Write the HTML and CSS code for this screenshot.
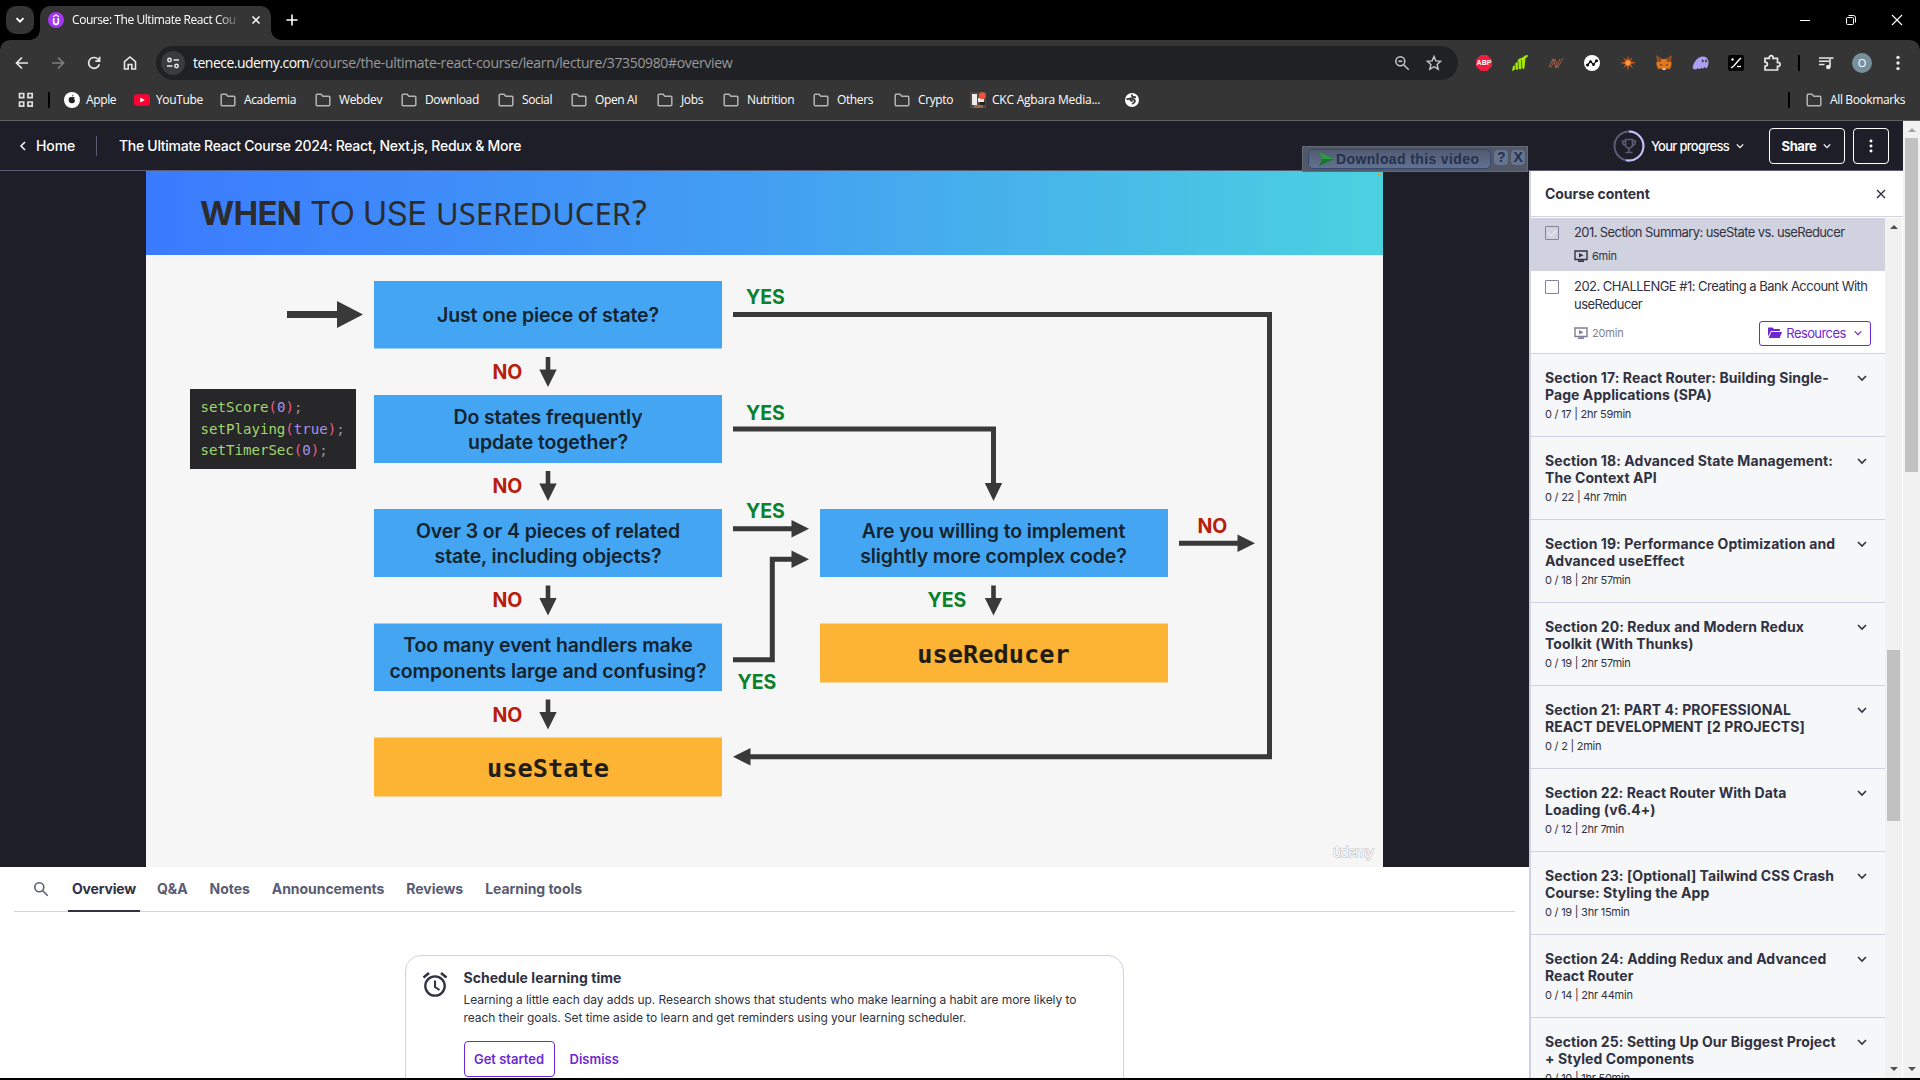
FILE: index.html
```html
<!DOCTYPE html>
<html lang="en">
<head>
<meta charset="utf-8">
<title>Course: The Ultimate React Course</title>
<link rel="stylesheet" href="styles.css">
</head>
<body>
<svg width="0" height="0" class="defs">
  <symbol id="folder" viewBox="0 0 16 16"><path d="M1.2 12.8V3.2q0-.9.9-.9h4l1.7 1.9h6.1q.9 0 .9.9v7.7q0 .9-.9.9H2.1q-.9 0-.9-.9z" fill="none" stroke="#b4b4b4" stroke-width="1.5"/></symbol>
  <symbol id="chev" viewBox="0 0 10 10"><path d="M1 3l4 4 4-4" fill="none" stroke="currentColor" stroke-width="1.6"/></symbol>
  <symbol id="dots" viewBox="0 0 4 16"><circle cx="2" cy="2.4" r="1.7"/><circle cx="2" cy="8" r="1.7"/><circle cx="2" cy="13.6" r="1.7"/></symbol>
  <symbol id="lesson" viewBox="0 0 14 12"><path d="M1 1h12v8.5H1zM4 11.3h6" fill="none" stroke="currentColor" stroke-width="1.4"/><path d="M5 3l4.5 2.3L5 7.6z" fill="currentColor"/></symbol>
</svg>

<header class="browser">
  <div class="tabstrip">
    <div class="tab-search"><svg width="10" height="10"><path d="M1.5 3.2L5 6.7l3.500-3.500" fill="none" stroke="#fff" stroke-width="1.8"/></svg></div>
    <div class="tab">
      <svg class="favicon" width="16" height="16" viewBox="0 0 16 16"><circle cx="8" cy="8" r="8" fill="#a435f0"/><path d="M5.700 6v4q0 2.300 2.300 2.300t2.300-2.300V6" fill="none" stroke="#fff" stroke-width="1.700"/><path d="M5 4.800L8 3l3 1.800" fill="none" stroke="#fff" stroke-width="1.300"/></svg>
      <span class="tab-title">Course: The Ultimate React Cou</span>
      <svg width="10" height="10"><path d="M1.500 1.500l7 7M8.500 1.500l-7 7" stroke="#fff" stroke-width="1.500"/></svg>
    </div>
    <svg class="new-tab" width="12" height="12"><path d="M6 .5v11M.5 6h11" stroke="#fff" stroke-width="1.600"/></svg>
    <div class="window-controls">
      <svg width="12" height="12"><path d="M1 6.500h10" stroke="#fff"/></svg>
      <svg width="12" height="12"><rect x="1.500" y="3.500" width="7" height="7" rx="1" fill="none" stroke="#fff"/><path d="M3.500 1.500h5q2 0 2 2v5" fill="none" stroke="#fff"/></svg>
      <svg width="12" height="12"><path d="M1 1l10 10M11 1L1 11" stroke="#fff" stroke-width="1.100"/></svg>
    </div>
  </div>

  <div class="toolbar">
    <div class="nav">
      <svg width="16" height="16"><path d="M14 8H3M8 2.500L2.500 8 8 13.500" fill="none" stroke="#e8e8e8" stroke-width="1.700"/></svg>
      <svg width="16" height="16"><path d="M2 8h11M8 2.500L13.500 8 8 13.500" fill="none" stroke="#7d7d7d" stroke-width="1.700"/></svg>
      <svg width="16" height="16"><path d="M13.300 9.200A5.400 5.400 0 1 1 11.800 4l1.600 1.600M13.600 1.800v4.300H9.300" fill="none" stroke="#e8e8e8" stroke-width="1.700"/></svg>
      <svg width="16" height="16"><path d="M2.500 6.700L8 2l5.500 4.700V14H9.800V9.500H6.200V14H2.500z" fill="none" stroke="#e8e8e8" stroke-width="1.600"/></svg>
    </div>
    <div class="omnibox">
      <span class="site-info"><svg width="14" height="14" fill="none" stroke="#e8e8e8" stroke-width="1.500"><circle cx="3.500" cy="4" r="1.700"/><path d="M7.500 4H13M1 10h5.500"/><circle cx="10.500" cy="10" r="1.700"/></svg></span>
      <span class="host">tenece.udemy.com</span><span class="path">/course/the-ultimate-react-course/learn/lecture/37350980#overview</span>
      <svg class="zoom-icon" width="16" height="16" fill="none" stroke="#c8c8c8" stroke-width="1.500"><circle cx="6.300" cy="6.300" r="4.500"/><path d="M9.700 9.700l5 5M4.300 6.300h4"/></svg>
      <svg width="16" height="16" viewBox="0 0 16 16"><path d="M8 1.500l1.900 4.400 4.800.4-3.600 3.200 1.100 4.700L8 11.700l-4.200 2.500 1.100-4.700L1.300 6.300l4.800-.4z" fill="none" stroke="#c8c8c8" stroke-width="1.400"/></svg>
    </div>
    <div class="extensions">
      <span class="abp">ABP</span>
      <svg width="16" height="16"><path d="M0 16l1-5 1.500-.5L3.500 8l1.500-.5L6.500 4 8 3.500 9.500 3 12 1.500 13 .5l3-.5-.5 2-2 1-.5 5-.5 5-1.500 1.500-1-3-1 2.500-1.500.5-1-2.500L6 14.500 4.500 15l-1-2-1 2z" fill="#a4e800"/><path d="M3.300 9.500v4M6.300 6.500v6M9.500 5v7" stroke="#49690a" stroke-width=".9"/></svg>
      <svg width="16" height="16" fill="none" stroke-width="1"><path d="M1 12.500L5 4l3 9 4-9" stroke="#b55f4a"/><path d="M3 12.500L7 4l3 8.500 5-9.500" stroke="#96593f"/></svg>
      <svg width="16" height="16"><circle cx="8" cy="8" r="8" fill="#fff"/><path d="M3.500 10l3-3.500 3 3L12.500 5.500" fill="none" stroke="#111" stroke-width="1.200"/><circle cx="3.500" cy="10" r="1.500"/><circle cx="6.500" cy="6.500" r="1.200"/><circle cx="9.500" cy="9.800" r="1.300"/><circle cx="12.500" cy="5.800" r="1.500"/></svg>
      <svg width="16" height="16"><path d="M8 0l.9 5 3.600-3-2.200 4.300 5.700 1.400-5.500 1.300 3 4.500-4.500-3.200-1 5.700-1-5.700-4 3.200L5.500 9.200 0 8l5.500-1.500L3 2.500 7 5z" fill="#d9571d"/><circle cx="8" cy="7.800" r="2.600" fill="#ff9b32"/></svg>
      <svg width="16" height="16"><path d="M.5.500L6 4h4L15.500.500 15 6l.7 3-1.700 5-3.500-.500L9.500 15h-3l-1-1.500L2 14 .3 9 1 6z" fill="#e2761b"/><path d="M.5.500L6 4 4 7.500 1 6zM15.500.500L10 4l2 3.500L15 6z" fill="#8f4a1d"/><path d="M4.500 9l2 1-2 .7zM11.500 9l-2 1 2 .7z" fill="#233447"/><path d="M6.500 13h3v2h-3z" fill="#d7c1b3"/></svg>
      <svg width="17" height="16"><path d="M.5 13Q2.500 3 10 1.500q6-.5 6.500 5.500.3 3.500-1.500 6-1.300 1-2.200-1.200-1.500 3-3.300.9Q7 15 5.700 13q-2.500 3-5.200 0z" fill="#ab9ff2"/><ellipse cx="10.700" cy="6" rx=".9" ry="1.400" fill="#333"/><ellipse cx="14" cy="6" rx=".9" ry="1.400" fill="#333"/></svg>
      <svg width="16" height="16"><rect width="16" height="16" rx="2.500"/><path d="M3 13l3-2.200L10 6l3-3" fill="none" stroke="#fff" stroke-width="1.400"/><circle cx="4.500" cy="4.500" r="1.200" fill="#fff"/><path d="M9 11.500h4" stroke="#fff" stroke-width="1.300"/></svg>
      <svg width="18" height="18"><path d="M2 4.300h4.300a2 2 0 1 1 3.800 0h4.400v4.200a2 2 0 1 1 0 3.800V16H2v-3.800q2.400-.2 2.400-2T2 8.200z" fill="none" stroke="#e8e8e8" stroke-width="1.700"/></svg>
      <i class="divider"></i>
      <svg width="16" height="16"><path d="M1 3h10M1 6.300h10M1 9.600h5.500" stroke="#e8e8e8" stroke-width="1.500"/><path d="M12 12V3h3.500" fill="none" stroke="#e8e8e8" stroke-width="1.600"/><circle cx="10.300" cy="12" r="2.300" fill="#e8e8e8"/></svg>
      <span class="avatar">O</span>
      <svg width="4" height="16" fill="#e8e8e8"><use href="#dots"/></svg>
    </div>
  </div>

  <nav class="bookmarks">
    <svg width="16" height="16" fill="none" stroke="#e0e0e0" stroke-width="1.700"><path d="M1.500 1.500h4.200v4.200H1.500zM10 1.500h4.200v4.200H10zM1.500 10h4.200v4.200H1.500zM10 10h4.200v4.200H10z"/></svg>
    <i class="divider"></i>
    <a class="near"><svg width="16" height="16"><circle cx="8" cy="8" r="8" fill="#fff"/><path d="M8 5.300q1.500-.9 2.800.3-1.500 1.500.3 3.200-1.200 3.200-3.100 2.300-2 1-3.200-2-.6-3.300 1.500-4Q7.300 5 8 5.300zM8 4.700q0-1.600 1.500-2.200 0 1.700-1.500 2.200z" fill="#222"/></svg>Apple</a>
    <a class="near"><svg width="16" height="16"><rect y="2.300" width="16" height="11.400" rx="2.500" fill="#ff0033"/><path d="M6.300 5.500L10.800 8l-4.500 2.500z" fill="#fff"/></svg>YouTube</a>
    <a><svg width="16" height="16"><use href="#folder"/></svg>Academia</a>
    <a><svg width="16" height="16"><use href="#folder"/></svg>Webdev</a>
    <a><svg width="16" height="16"><use href="#folder"/></svg>Download</a>
    <a><svg width="16" height="16"><use href="#folder"/></svg>Social</a>
    <a><svg width="16" height="16"><use href="#folder"/></svg>Open AI</a>
    <a><svg width="16" height="16"><use href="#folder"/></svg>Jobs</a>
    <a><svg width="16" height="16"><use href="#folder"/></svg>Nutrition</a>
    <a><svg width="16" height="16"><use href="#folder"/></svg>Others</a>
    <a><svg width="16" height="16"><use href="#folder"/></svg>Crypto</a>
    <a class="near media"><svg width="16" height="16"><rect width="16" height="16" fill="#504840"/><rect x="2" y="2" width="5" height="11" fill="#eee"/><path d="M8 6h6v4H8z" fill="#f3e8e2"/><path d="M10 10h5v3h-5z" fill="#222"/><path d="M4 13h9v3H4z" fill="#9a6748"/><circle cx="12.300" cy="3.700" r="3.500" fill="#ee5340"/></svg>CKC Agbara Media...</a>
    <svg width="16" height="16"><circle cx="8" cy="8" r="7" fill="#fff"/><path d="M2.500 7q2 .3 3.500-.3 1.700-1 3 .5 1.500.300 2 1.800-.5 2-2.800 3M8 2.500q-.5 2 1.500 2.500l2.500.300M6 7.500l2.500 2" fill="none" stroke="#353535" stroke-width="1.800"/></svg>
    <i class="divider"></i>
    <a class="all"><svg width="16" height="16"><use href="#folder"/></svg>All Bookmarks</a>
  </nav>
</header>

<div class="page">
  <div class="app">
    <header class="course-header">
      <a class="home"><svg width="8" height="10"><path d="M6 1L2 5l4 4" fill="none" stroke="#fff" stroke-width="1.500"/></svg>Home</a>
      <h1>The Ultimate React Course 2024: React, Next.js, Redux &amp; More</h1>
      <div class="progress">
        <svg width="32" height="32" fill="none"><circle cx="16" cy="16" r="14.500" stroke="#595c73" stroke-width="2"/><path d="M16 1.500a14.500 14.500 0 1 1-3 28.700" stroke="#c0c4fc" stroke-width="2"/><path d="M12.500 9.500h7v5q0 3.500-3.500 3.500t-3.500-3.500zM12.500 11h-3q0 4 3.300 4.500M19.500 11h3q0 4-3.300 4.500M16 18v4M12.500 22.500h7" stroke="#595c73" stroke-width="1.600"/></svg>
        <span>Your progress</span><svg width="8" height="8"><use href="#chev"/></svg>
      </div>
      <button class="share">Share<svg width="8" height="8"><use href="#chev"/></svg></button>
      <button class="more"><svg width="4" height="14" fill="#fff"><use href="#dots"/></svg></button>
    </header>

    <div class="body">
      <main>
        <div class="video">
          <svg class="slide" width="1237" height="696" viewBox="146 171 1237 696">
            <defs>
              <linearGradient id="banner"><stop offset="0" stop-color="#3b7bff"/><stop offset=".5" stop-color="#439ff2"/><stop offset="1" stop-color="#4bd1e0"/></linearGradient>
              <path id="down" d="M-2.300 0h4.600v12.500H8.700L0 30-8.700 12.500h6.400z"/>
            </defs>
            <rect x="146" y="171" width="1237" height="696" fill="#f6f6f6"/>
            <rect x="146" y="171" width="1237" height="84" fill="url(#banner)"/>
            <g class="slide-title">
              <text x="200" y="225" textLength="102" class="heavy">WHEN</text>
              <text x="310" y="225" textLength="117">TO USE</text>
              <text x="436" y="225" textLength="195" class="alt">USEREDUCER</text>
              <text x="632" y="225" class="alt mark">?</text>
            </g>
            <g fill="#44a5f2">
              <rect x="374" y="281" width="348" height="67.500"/><rect x="374" y="395" width="348" height="68"/>
              <rect x="374" y="509" width="348" height="68"/><rect x="374" y="623.500" width="348" height="67.500"/>
              <rect x="820" y="509" width="348" height="68"/>
            </g>
            <g fill="#fdb333"><rect x="374" y="737.500" width="348" height="59"/><rect x="820" y="623.500" width="348" height="59"/></g>
            <g class="question">
              <text x="548" y="322">Just one piece of state?</text>
              <text x="548" y="423.500">Do states frequently</text><text x="548" y="449">update together?</text>
              <text x="548" y="537.500">Over 3 or 4 pieces of related</text><text x="548" y="563">state, including objects?</text>
              <text x="548" y="652">Too many event handlers make</text><text x="548" y="677.500">components large and confusing?</text>
              <text x="993.500" y="537.500">Are you willing to implement</text><text x="993.500" y="563">slightly more complex code?</text>
            </g>
            <g class="result"><text x="548" y="776.500">useState</text><text x="993.500" y="662.500">useReducer</text></g>
            <g class="yes"><text x="746" y="304">YES</text><text x="746" y="420">YES</text><text x="746" y="517.500">YES</text><text x="737.500" y="689">YES</text><text x="927.500" y="607">YES</text></g>
            <g class="no"><text x="492.500" y="378.500">NO</text><text x="492.500" y="492.500">NO</text><text x="492.500" y="607">NO</text><text x="492.500" y="721.500">NO</text><text x="1197.500" y="532.500">NO</text></g>
            <g fill="#393939">
              <path d="M287 311h50v-10l26 13.500-26 13.500v-10h-50z"/>
              <use href="#down" x="548" y="357"/><use href="#down" x="548" y="471"/><use href="#down" x="548" y="585.500"/><use href="#down" x="548" y="699.500"/><use href="#down" x="993.500" y="585.500"/>
              <path d="M984.800 483h17.400L993.500 501zM791.500 520l17.500 8.700-17.500 8.700zM791.500 550.500l17.500 8.700-17.500 8.700zM1237.500 534.500l17.500 8.800-17.500 8.800zM750.500 748l-17.500 8.800 17.500 8.800z"/>
            </g>
            <g fill="none" stroke="#393939" stroke-width="5"><path d="M733 314.500h536.500v442.300H750"/><path d="M733 429h260.500v55"/><path d="M733 528.700h59"/><path d="M733 659.700h39.300V559.200H792"/><path d="M1179 543.300h59"/></g>
            <rect x="190" y="389" width="166" height="80" fill="#272629"/>
            <g class="code">
              <text x="200.500" y="412">setScore<tspan class="paren">(</tspan><tspan class="value">0</tspan><tspan class="paren">)</tspan><tspan class="semi">;</tspan></text>
              <text x="200.500" y="433.500">setPlaying<tspan class="paren">(</tspan><tspan class="value">true</tspan><tspan class="paren">)</tspan><tspan class="semi">;</tspan></text>
              <text x="200.500" y="454.500">setTimerSec<tspan class="paren">(</tspan><tspan class="value">0</tspan><tspan class="paren">)</tspan><tspan class="semi">;</tspan></text>
            </g>
            <circle cx="1379" cy="174.500" r="1.700" fill="#e79a3c"/>
            <text class="watermark" x="1333" y="857" textLength="41">udemy</text>
            <path class="watermark" d="M1334 848l3-2 3 2"/>
          </svg>
        </div>

        <nav class="tabs">
          <svg width="16" height="16" fill="none" stroke="#595c73" stroke-width="1.600"><circle cx="6.300" cy="6.300" r="4.500"/><path d="M9.700 9.700l5 5"/></svg>
          <a class="active">Overview</a><a>Q&amp;A</a><a>Notes</a><a>Announcements</a><a>Reviews</a><a>Learning tools</a>
        </nav>

        <section class="schedule">
          <svg width="26" height="26" fill="none" stroke="#303141"><circle cx="13" cy="14" r="9.700" stroke-width="2.300"/><path d="M13 8.500V15l4.500 3" stroke-width="2"/><path d="M1.500 5.500L7 1M24.500 5.500L19 1" stroke-width="2.500"/></svg>
          <div>
            <h2>Schedule learning time</h2>
            <p>Learning a little each day adds up. Research shows that students who make learning a habit are more likely to<br>reach their goals. Set time aside to learn and get reminders using your learning scheduler.</p>
            <div class="actions"><button class="start">Get started</button><button class="dismiss">Dismiss</button></div>
          </div>
        </section>
      </main>

      <aside>
        <header><h2>Course content</h2><svg width="10" height="10"><path d="M1 1l8 8M9 1L1 9" stroke="#303141" stroke-width="1.400"/></svg></header>
        <div class="list-wrap">
          <div class="list">
            <div class="lecture current">
              <i class="check"><svg width="12" height="12"><path d="M2 6l3 3 5.500-6" fill="none" stroke="#e6e6ef" stroke-width="1.200"/></svg></i>
              <div><p>201. Section Summary: useState vs. useReducer</p>
              <div class="meta"><span class="dur"><svg width="14" height="12"><use href="#lesson"/></svg>6min</span></div></div>
            </div>
            <div class="lecture">
              <i class="check"></i>
              <div><p>202. CHALLENGE #1: Creating a Bank Account With<br>useReducer</p>
              <div class="meta"><span class="dur muted"><svg width="14" height="12"><use href="#lesson"/></svg>20min</span>
              <button class="resources"><svg width="14" height="12" fill="#6d28d2"><path d="M0 9.500V1.200q0-.7.7-.7h3.800L6 2h5.300q.7 0 .7.700V4H3z"/><path d="M3.300 5H14l-2.300 6H.7z"/></svg>Resources<svg width="8" height="8"><use href="#chev"/></svg></button></div></div>
            </div>
            <div class="section"><div><h3>Section 17: React Router: Building Single-<br>Page Applications (SPA)</h3><p>0 / 17 | 2hr 59min</p></div><svg width="10" height="10"><use href="#chev"/></svg></div>
            <div class="section"><div><h3>Section 18: Advanced State Management:<br>The Context API</h3><p>0 / 22 | 4hr 7min</p></div><svg width="10" height="10"><use href="#chev"/></svg></div>
            <div class="section"><div><h3>Section 19: Performance Optimization and<br>Advanced useEffect</h3><p>0 / 18 | 2hr 57min</p></div><svg width="10" height="10"><use href="#chev"/></svg></div>
            <div class="section"><div><h3>Section 20: Redux and Modern Redux<br>Toolkit (With Thunks)</h3><p>0 / 19 | 2hr 57min</p></div><svg width="10" height="10"><use href="#chev"/></svg></div>
            <div class="section"><div><h3>Section 21: PART 4: PROFESSIONAL<br>REACT DEVELOPMENT [2 PROJECTS]</h3><p>0 / 2 | 2min</p></div><svg width="10" height="10"><use href="#chev"/></svg></div>
            <div class="section"><div><h3>Section 22: React Router With Data<br>Loading (v6.4+)</h3><p>0 / 12 | 2hr 7min</p></div><svg width="10" height="10"><use href="#chev"/></svg></div>
            <div class="section"><div><h3>Section 23: [Optional] Tailwind CSS Crash<br>Course: Styling the App</h3><p>0 / 19 | 3hr 15min</p></div><svg width="10" height="10"><use href="#chev"/></svg></div>
            <div class="section"><div><h3>Section 24: Adding Redux and Advanced<br>React Router</h3><p>0 / 14 | 2hr 44min</p></div><svg width="10" height="10"><use href="#chev"/></svg></div>
            <div class="section"><div><h3>Section 25: Setting Up Our Biggest Project<br>+ Styled Components</h3><p>0 / 10 | 1hr 50min</p></div><svg width="10" height="10"><use href="#chev"/></svg></div>
          </div>
          <div class="scrollbar inner"><i class="arrow up"></i><i class="thumb"></i><i class="arrow"></i></div>
        </div>
      </aside>
    </div>
  </div>
  <div class="scrollbar outer"><i class="arrow up"></i><i class="thumb"></i><i class="arrow"></i></div>
  <div class="downloader"><span class="dl"><svg width="15" height="14"><path d="M0 0l15 7L0 14l3.500-7z" fill="#17752d"/><path d="M0 0l15 7H3.500z" fill="#2f9a45"/></svg>Download this video</span><b>?</b><b>X</b></div>
</div>
</body>
</html>
```
FILE: styles.css
```css
* { box-sizing: border-box; }
body { margin: 0; width: 1920px; height: 1080px; overflow: hidden; background: #000; font-family: Inter, "Liberation Sans", sans-serif; display: flex; flex-direction: column; }
h1, h2, h3, p { margin: 0; font-weight: 400; }
button { font: inherit; background: none; padding: 0; margin: 0; }
svg { flex: none; display: block; }
.defs { position: absolute; }

/* Browser chrome */
.browser { height: 121px; flex: none; background: #000; color: #fff; font: 12px/16px "Open Sans", "Noto Sans", sans-serif; border-bottom: 1px solid #616161; }
.tabstrip { height: 40px; display: flex; align-items: center; padding-left: 6px; }
.tab-search { width: 28px; height: 28px; border-radius: 10px; background: #353535; display: grid; place-items: center; }
.tab { align-self: flex-end; position: relative; width: 231px; height: 34px; margin-left: 6px; padding: 0 10px 6px 8px; border-radius: 10px 10px 0 0; background: #353535; display: flex; align-items: center; }
.tab::before, .tab::after { content: ""; position: absolute; bottom: 0; width: 10px; height: 10px; }
.tab::before { left: -10px; background: radial-gradient(circle at 0 0, transparent 9.5px, #353535 10px); }
.tab::after { right: -10px; background: radial-gradient(circle at 100% 0, transparent 9.5px, #353535 10px); }
.tab-title { width: 167px; margin: 0 13px 0 8px; white-space: nowrap; letter-spacing: -.43px; mask-image: linear-gradient(90deg, #000 145px, transparent 170px); }
.new-tab { margin-left: 15px; }
.window-controls { margin-left: auto; margin-right: 17px; display: flex; gap: 34px; }
.toolbar { height: 46px; background: #353535; border-radius: 10px 10px 0 0; display: flex; align-items: center; padding-left: 14px; }
.nav { display: flex; gap: 20px; width: 142px; }
.omnibox { width: 1302px; height: 34px; border-radius: 17px; background: #202124; display: flex; align-items: center; padding: 0 16px 0 5px; font-size: 14px; }
.site-info { width: 24px; height: 24px; border-radius: 50%; background: #3a3b3d; display: grid; place-items: center; margin-right: 8px; }
.host { letter-spacing: -.52px; }
.path { letter-spacing: -.35px; color: #9a9a9a; }
.zoom-icon { margin-left: auto; margin-right: 16px; }
.extensions { display: grid; grid-template-columns: repeat(9, 36px) 18px repeat(3, 36px); place-items: center; padding-left: 8px; }
.abp { width: 16px; height: 16px; background: #ef1d3f; color: #fff; font: 700 7px/16px "Liberation Sans", sans-serif; text-align: center; clip-path: polygon(30% 0, 70% 0, 100% 30%, 100% 70%, 70% 100%, 30% 100%, 0 70%, 0 30%); }
.divider { width: 2px; height: 16px; background: #000; }
.avatar { width: 20px; height: 20px; border-radius: 50%; background: #78909c; text-align: center; line-height: 20px; font-size: 11px; }
.bookmarks { height: 34px; background: #353535; padding: 0 15px 6px 18px; display: grid; grid-template-columns: 30px 16px 70px 86px 95px 86px 97px 73px 86px 66px 90px 81px 76px 154px 664px 18px 1fr; align-items: center; }
.bookmarks a { display: flex; align-items: center; gap: 8px; letter-spacing: -.37px; white-space: nowrap; }
.bookmarks a.near { gap: 6px; }
.bookmarks a.media { letter-spacing: -.22px; }

/* Course application */
.page { height: 957px; flex: none; display: flex; position: relative; }
.app { width: 1903px; display: flex; flex-direction: column; }
.course-header { height: 50px; background: #1d1e27; border-bottom: 1px solid #595c73; color: #fff; display: flex; align-items: center; font-size: 14px; font-weight: 500; padding-right: 14px; }
.home { display: flex; align-items: center; gap: 9px; width: 97px; height: 20px; padding-left: 19px; letter-spacing: -.1px; border-right: 1px solid #595c73; }
.course-header h1 { font: inherit; letter-spacing: -.29px; margin-left: 22px; white-space: nowrap; }
.progress { display: flex; align-items: center; margin-left: auto; font-size: 13px; letter-spacing: -.7px; }
.progress span { margin: 0 7px 0 6px; }
.share { display: flex; align-items: center; justify-content: center; gap: 7px; width: 76px; height: 36px; margin: 0 8px 0 25px; padding-right: 1px; border: 1px solid #fff; border-radius: 4px; color: #fff; font-size: 13px; font-weight: 700; letter-spacing: -.4px; }
.more { width: 36px; height: 36px; border: 1px solid #fff; border-radius: 4px; display: grid; place-items: center; }
.body { flex: 1; min-height: 0; display: flex; }
main { width: 1529px; background: #fff; overflow: hidden; display: flex; flex-direction: column; align-items: center; }
.video { width: 100%; height: 696px; flex: none; background: #1d1e27; padding-left: 146px; }

/* Lecture slide */
.slide-title { font-size: 33px; fill: #2c2c2c; }
.heavy { font-weight: 700; }
.alt { font-family: "Noto Sans", sans-serif; font-size: 31px; }
.mark { font-size: 34px; }
.question { font-size: 19.500px; font-weight: 600; letter-spacing: -.11px; fill: #14242e; text-anchor: middle; }
.result { font: 700 25.300px "DejaVu Sans Mono", monospace; fill: #211d16; text-anchor: middle; }
.yes { font-size: 19.500px; font-weight: 700; fill: #0b812c; }
.no { font-size: 19.500px; font-weight: 700; fill: #b91d0c; }
.code { font: 14.100px "DejaVu Sans Mono", monospace; fill: #a3d76e; }
.paren { fill: #ec5a86; }
.value { fill: #a890e8; }
.semi { fill: #98979a; }
.watermark { font-size: 14px; fill: #fff; stroke: #b5b5b5; stroke-width: 1px; paint-order: stroke; }

/* Tabs below the video */
.tabs { width: 1501px; height: 45px; flex: none; display: flex; align-items: center; gap: 22px; padding-left: 19px; border-bottom: 1px solid #d1d2e0; font-size: 14px; font-weight: 700; color: #595c73; letter-spacing: -.05px; }
.tabs svg { margin-top: -1px; }
.tabs a { height: 45px; line-height: 43px; white-space: nowrap; }
.tabs .active { color: #303141; padding: 0 4px; margin: 0 -4px 0 -3px; width: 72px; border-bottom: 2px solid #303141; letter-spacing: -.18px; }
.tabs .active + a { margin-left: -1px; }
.schedule { width: 719px; height: 160px; flex: none; margin: 43px 1px 0 0; border: 1px solid #d1d2e0; border-radius: 16px; padding: 13px 16px; display: flex; gap: 16px; color: #303141; }
.schedule > svg { margin-top: 3px; }
.schedule h2 { font-size: 14px; font-weight: 700; line-height: 18px; letter-spacing: .04px; }
.schedule p { font-size: 12px; line-height: 18px; margin-top: 4px; letter-spacing: -.07px; white-space: nowrap; }
.actions { display: flex; align-items: center; gap: 15px; margin-top: 14px; color: #6d28d2; font-size: 13px; font-weight: 600; letter-spacing: -.25px; }
.actions button { color: inherit; border: 0; height: 36px; }
.actions .start { width: 91px; border: 1px solid #6d28d2; border-radius: 4px; }

/* Course content panel */
aside { width: 374px; background: #fff; border-left: 2px solid #d1d2e0; color: #303141; display: flex; flex-direction: column; }
aside header { height: 46px; flex: none; display: flex; align-items: center; justify-content: space-between; padding: 0 17px 0 14px; border-bottom: 1px solid #d1d2e0; }
aside h2 { font-size: 14px; font-weight: 700; letter-spacing: -.05px; margin-top: -1px; }
.list-wrap { flex: 1; min-height: 0; display: flex; padding-top: 1px; }
.list { width: 354px; overflow: hidden; }
.lecture { display: flex; height: 82px; padding: 6px 14px 0; gap: 15px; font-size: 13px; line-height: 18px; letter-spacing: -.52px; }
.lecture > div { flex: 1; }
.lecture p { white-space: nowrap; }
.lecture.current { height: 53px; background: #d1d2e0; padding-top: 5px; letter-spacing: -.59px; }
.check { width: 14px; height: 14px; margin-top: 3px; border: 1px solid #82839a; border-radius: 1px; }
.meta { display: flex; align-items: center; justify-content: space-between; height: 24px; margin-top: 8px; }
.current .meta { margin-top: 3px; }
.dur { display: flex; align-items: center; gap: 4px; font-size: 11px; letter-spacing: -.2px; }
.muted { color: #7d7f94; }
.resources { width: 112px; height: 25px; border: 1px solid #6d28d2; border-radius: 3px; color: #6d28d2; display: flex; align-items: center; justify-content: center; gap: 4px; letter-spacing: -.58px; }
.resources svg:last-child { margin-left: 4px; }
.section { height: 83px; padding: 15px 18px 0 14px; background: #f6f7f9; border-top: 1px solid #d1d2e0; display: flex; justify-content: space-between; }
.section > svg { margin-top: 4px; }
.section h3 { font-size: 14px; font-weight: 700; line-height: 17px; letter-spacing: .07px; white-space: nowrap; }
.section p { font-size: 11px; line-height: 16px; letter-spacing: -.24px; margin-top: 3px; }

/* Scrollbars */
.scrollbar { width: 17px; background: #f1f1f1; display: flex; flex-direction: column; align-items: center; }
.thumb { width: 13px; background: #c1c1c1; }
.arrow { border: 4px solid transparent; border-top-color: #505050; border-bottom: 0; margin: auto 0 7px; }
.arrow.up { border: 4px solid transparent; border-bottom-color: #505050; border-top: 0; margin: 7px 0; }
.inner .thumb { height: 171px; margin-top: 414px; }
.outer .thumb { height: 334px; }
.outer .arrow.up { border-bottom-color: #a3a3a3; margin: 7px 0 6px; }

/* Video downloader overlay */
.downloader { position: absolute; left: 1302px; top: 25px; width: 226px; height: 26px; padding: 0 2px 0 5px; display: flex; align-items: center; gap: 3px; background: #535866; border: 1px solid #656a7b; color: #25314f; font: 700 14px/20px "Liberation Sans", sans-serif; }
.dl { width: 185px; height: 20px; display: flex; align-items: center; gap: 2px; padding-left: 10px; background: linear-gradient(#525c72, #61718f); border: 1px solid #37486e; border-radius: 5px; letter-spacing: .38px; white-space: nowrap; }
.downloader b { width: 14px; height: 15px; border-radius: 4px; background: #66748f; text-align: center; line-height: 15px; margin-top: -3px; }
```
